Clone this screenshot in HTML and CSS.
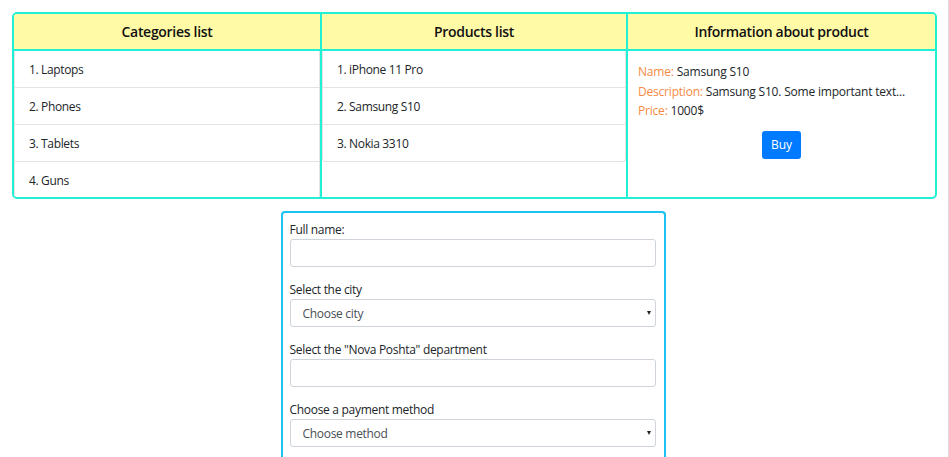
FILE: index.html
```html
<!DOCTYPE html>
<html lang="en">
<head>
<meta charset="utf-8">
<title>Shop</title>
<link rel="stylesheet" href="styles.css">
</head>
<body>
<div class="panels">
  <section class="panel">
    <h2 class="panel-head">Categories list</h2>
    <ul class="list list-fill">
      <li class="list-item">1. Laptops</li>
      <li class="list-item">2. Phones</li>
      <li class="list-item">3. Tablets</li>
      <li class="list-item">4. Guns</li>
    </ul>
  </section>
  <section class="panel">
    <h2 class="panel-head">Products list</h2>
    <ul class="list">
      <li class="list-item">1. iPhone 11 Pro</li>
      <li class="list-item">2. Samsung S10</li>
      <li class="list-item">3. Nokia 3310</li>
    </ul>
  </section>
  <section class="panel">
    <h2 class="panel-head">Information about product</h2>
    <div class="info">
      <p class="info-line"><span class="info-key">Name:</span> Samsung S10</p>
      <p class="info-line"><span class="info-key">Description:</span> Samsung S10. Some important text...</p>
      <p class="info-line"><span class="info-key">Price:</span> 1000$</p>
      <div class="info-actions"><button class="btn-buy" type="button">Buy</button></div>
    </div>
  </section>
</div>

<form class="order">
  <div class="field">
    <label class="field-label" for="fullname">Full name:</label>
    <input class="control" id="fullname" type="text">
  </div>
  <div class="field">
    <label class="field-label" for="city">Select the city</label>
    <div class="select-wrap">
      <select class="control select" id="city"><option>Choose city</option></select>
    </div>
  </div>
  <div class="field">
    <label class="field-label" for="dept">Select the "Nova Poshta" department</label>
    <input class="control" id="dept" type="text">
  </div>
  <div class="field">
    <label class="field-label" for="pay">Choose a payment method</label>
    <div class="select-wrap">
      <select class="control select" id="pay"><option>Choose method</option></select>
    </div>
  </div>
</form>
<div class="scroll-edge"></div>
</body>
</html>
```

FILE: styles.css
```css
* { box-sizing: border-box; }

html, body {
  margin: 0;
  padding: 0;
  background: #fff;
}

body {
  font-family: "Open Sans", "Noto Sans", sans-serif;
  font-size: 12px;
  color: #212529;
  padding: 12px 12px 0;
}

.panels {
  display: grid;
  grid-template-columns: 306px 306px 1fr;
  border: 2px solid #22f0d4;
  border-radius: 5px;
  overflow: hidden;
}

.panel {
  display: flex;
  flex-direction: column;
  height: 183px;
  overflow: hidden;
}

.panel + .panel {
  border-left: 2px solid #22f0d4;
}

.panel-head {
  flex: none;
  margin: 0;
  height: 37px;
  background: #fffaa6;
  border-bottom: 2px solid #22f0d4;
  font-size: 14px;
  font-weight: 600;
  letter-spacing: -0.3px;
  line-height: 35px;
  text-align: center;
  color: #111;
}

.list {
  list-style: none;
  margin: 0;
  padding: 0;
  border: 1px solid #e3e3e3;
  border-top: none;
  border-radius: 0 0 3px 3px;
}

.list-fill {
  flex: 1;
}

.list-item {
  height: 37px;
  line-height: 36px;
  padding: 1px 14px 0;
  border-bottom: 1px solid #e3e3e3;
  letter-spacing: -0.35px;
}

.list-item:last-child {
  border-bottom: none;
  height: 36px;
}

.info {
  padding: 11px 10px 0;
}

.info-line {
  margin: 0;
  line-height: 19.5px;
  letter-spacing: -0.2px;
}

.info-key {
  color: #f68a45;
}

.info-actions {
  display: flex;
  justify-content: center;
  margin-top: 10px;
}

.btn-buy {
  width: 39px;
  height: 28px;
  padding: 0;
  border: none;
  border-radius: 3px;
  background: #007bff;
  color: #fff;
  font-family: inherit;
  font-size: 12px;
}

.order {
  width: 385px;
  margin: 12px 0 0 calc(50% - 194px);
  border: 2px solid #1cc3f2;
  border-bottom: none;
  border-radius: 4px 4px 0 0;
  padding: 8px 8px 20px 7px;
}

.field {
  margin-bottom: 14px;
}

.field-label {
  display: block;
  line-height: 18px;
  letter-spacing: -0.3px;
  color: #212529;
}

.control {
  display: block;
  width: 100%;
  height: 28px;
  margin: 0;
  border: 1px solid #ced4da;
  border-radius: 3px;
  background: #fff;
  font-family: inherit;
  font-size: 12px;
  letter-spacing: -0.3px;
  color: #495057;
  padding: 0 12px;
}

.select {
  appearance: none;
  -webkit-appearance: none;
}

.select-wrap {
  position: relative;
}

.select-wrap::after {
  content: "";
  position: absolute;
  right: 5px;
  top: 12px;
  border-left: 2.5px solid transparent;
  border-right: 2.5px solid transparent;
  border-top: 4px solid #222;
  pointer-events: none;
}

.scroll-edge {
  position: fixed;
  top: 0;
  right: 0;
  width: 1px;
  height: 100%;
  background: #dcdcdc;
}
```
